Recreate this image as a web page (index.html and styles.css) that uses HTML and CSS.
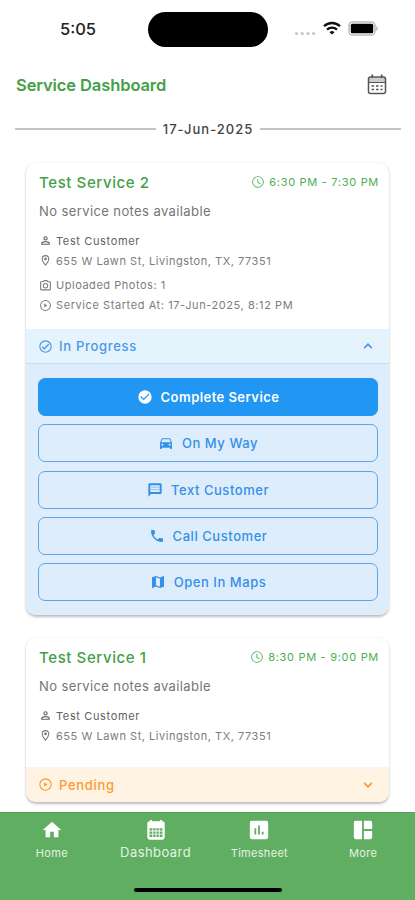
FILE: index.html
```html
<!DOCTYPE html>
<html lang="en">
<head>
<meta charset="utf-8">
<title>Service Dashboard</title>
<link rel="stylesheet" href="styles.css">
</head>
<body>
<svg class="defs" width="0" height="0">
  <symbol id="clock" viewBox="0 0 24 24"><path d="M12 2a10 10 0 1 0 0 20 10 10 0 0 0 0-20zm0 18.500a8.500 8.500 0 1 1 0-17 8.500 8.500 0 0 1 0 17zM11 7h1.500v5.200l4 2.500-.8 1.300L11 13z"/></symbol>
  <symbol id="person" viewBox="0 0 24 24"><path d="M12 6a2 2 0 1 1 0 4 2 2 0 0 1 0-4m0 9c2.700 0 5.800 1.300 6 2v1H6v-1c.2-.7 3.300-2 6-2m0-11a4 4 0 1 0 0 8 4 4 0 0 0 0-8zm0 9c-2.700 0-8 1.300-8 4v3h16v-3c0-2.700-5.300-4-8-4z"/></symbol>
  <symbol id="pin" viewBox="0 0 24 24"><path d="M12 2a7 7 0 0 0-7 7c0 5.250 7 13 7 13s7-7.750 7-13a7 7 0 0 0-7-7zM7 9a5 5 0 0 1 10 0c0 2.880-2.880 7.190-5 9.880C9.920 16.210 7 11.850 7 9z"/><circle cx="12" cy="9" r="2.500"/></symbol>
  <symbol id="camera" viewBox="0 0 24 24"><path d="M20 4h-3.170L15 2H9L7.170 4H4a2 2 0 0 0-2 2v13a2 2 0 0 0 2 2h16a2 2 0 0 0 2-2V6a2 2 0 0 0-2-2zm0 15H4V6h4.050l1.830-2h4.240l1.830 2H20zM12 7.500a5 5 0 1 0 0 10 5 5 0 0 0 0-10zm0 8.200a3.200 3.200 0 1 1 0-6.400 3.200 3.200 0 0 1 0 6.400z"/></symbol>
  <symbol id="play" viewBox="0 0 24 24"><path d="M12 2a10 10 0 1 0 0 20 10 10 0 0 0 0-20zm0 18.200a8.200 8.200 0 1 1 0-16.400 8.200 8.200 0 0 1 0 16.400zM9.700 8.300v7.400l5.600-3.700z"/></symbol>
  <symbol id="check-outline" viewBox="0 0 24 24"><path d="M12 2a10 10 0 1 0 0 20 10 10 0 0 0 0-20zm0 18.200a8.200 8.200 0 1 1 0-16.400 8.200 8.200 0 0 1 0 16.400zM16.590 7.580 10 14.170l-2.590-2.580L6 13l4 4 8-8z"/></symbol>
  <symbol id="check" viewBox="0 0 24 24"><path d="M12 2a10 10 0 1 0 0 20 10 10 0 0 0 0-20zm-2 15-5-5 1.410-1.410L10 14.170l7.590-7.590L19 8z"/></symbol>
  <symbol id="car" viewBox="0 0 24 24"><path d="M18.920 6.010C18.720 5.420 18.160 5 17.500 5h-11c-.66 0-1.210.42-1.420 1.010L3 12v8c0 .55.450 1 1 1h1c.55 0 1-.45 1-1v-1h12v1c0 .55.450 1 1 1h1c.55 0 1-.45 1-1v-8zM6.500 16a1.500 1.500 0 1 1 0-3 1.500 1.500 0 0 1 0 3zm11 0a1.500 1.500 0 1 1 0-3 1.500 1.500 0 0 1 0 3zM5 11l1.500-4.500h11L19 11z"/></symbol>
  <symbol id="message" viewBox="0 0 24 24"><path fill-rule="evenodd" d="M20 2H4a2 2 0 0 0-2 2v18l4-4h14a2 2 0 0 0 2-2V4a2 2 0 0 0-2-2zM5 5h14v10H5z"/><path d="M6 7h12v1.500H6zM6 10.500h12V12H6z" opacity=".45"/></symbol>
  <symbol id="phone" viewBox="0 0 24 24"><path d="M6.620 10.790a15.150 15.150 0 0 0 6.590 6.590l2.200-2.200c.27-.27.670-.36 1.020-.24 1.120.37 2.330.57 3.570.57.550 0 1 .45 1 1V20c0 .55-.45 1-1 1C10.610 21 3 13.390 3 4c0-.55.450-1 1-1h3.500c.55 0 1 .45 1 1 0 1.250.2 2.450.57 3.570.11.350.03.740-.25 1.020z"/></symbol>
  <symbol id="map" viewBox="0 0 24 24"><path d="M20.500 3l-.16.030L15 5.100 9 3 3.360 4.900c-.21.070-.36.250-.36.480V20.500c0 .28.220.5.500.5l.16-.03L9 18.900l6 2.100 5.640-1.900c.21-.07.360-.25.360-.48V3.500c0-.28-.22-.5-.5-.5zM15 19l-6-2.110V5l6 2.110z"/></symbol>
  <symbol id="up" viewBox="0 0 24 24"><path d="M12 8l-6 6 1.600 1.600L12 11.200l4.400 4.400L18 14z"/></symbol>
  <symbol id="down" viewBox="0 0 24 24"><path d="M16.400 8.400 12 12.800 7.600 8.400 6 10l6 6 6-6z"/></symbol>
  <symbol id="home" viewBox="0 0 24 24"><path d="M10 20v-6h4v6h5v-8h3L12 3 2 12h3v8z"/></symbol>
  <symbol id="calendar" viewBox="0 0 24 24"><path fill-rule="evenodd" d="M5 2.500h.5V1h2.200v1.500h8.600V1h2.200v1.500h.5a2.500 2.500 0 0 1 2.500 2.500v15a2.500 2.500 0 0 1-2.500 2.500H5A2.500 2.500 0 0 1 2.500 20V5A2.500 2.500 0 0 1 5 2.500zM5 10v9.500h14V10z"/><path d="M5 12.500h14v1H5zM5 16h14v1H5zM8 10h1v9.500H8zM11.500 10h1v9.500h-1zM15 10h1v9.500h-1z"/></symbol>
  <symbol id="chart" viewBox="0 0 24 24"><path fill-rule="evenodd" d="M4 2h16a2 2 0 0 1 2 2v16a2 2 0 0 1-2 2H4a2 2 0 0 1-2-2V4a2 2 0 0 1 2-2zm3 8v7h2v-7zm4-3v10h2V7zm4 7v3h2v-3z"/></symbol>
  <symbol id="more" viewBox="0 0 24 24"><path d="M11 22H4a2 2 0 0 1-2-2V4a2 2 0 0 1 2-2h7zM13 2h7a2 2 0 0 1 2 2v7h-9zM13 13h9v7a2 2 0 0 1-2 2h-7z"/></symbol>
</svg>

<div class="status">
  <span class="time">5:05</span>
  <span class="island"></span>
  <span class="indicators">
    <svg class="signal" width="22" height="5" viewBox="0 0 22 5"><circle cx="2.500" cy="2.500" r="1.600"/><circle cx="8.200" cy="2.500" r="1.600"/><circle cx="13.900" cy="2.500" r="1.600"/><circle cx="19.600" cy="2.500" r="1.600"/></svg>
    <svg class="wifi" width="18" height="14" viewBox="0 0 18 14" fill="none" stroke="#111" stroke-width="2.300"><path d="M1 5.300a11.300 11.300 0 0 1 16 0M4 8.700a7.200 7.200 0 0 1 10 0"/><path d="M9 13.600 6.500 11.200a3.700 3.700 0 0 1 5 0z" fill="#111" stroke="none"/></svg>
    <svg class="battery" width="31" height="15" viewBox="0 0 31 15"><rect x="1" y="1" width="26" height="13" rx="4" fill="#fff" stroke="#bdbdbd" stroke-width="1.600"/><rect x="2.800" y="2.800" width="22.400" height="9.400" rx="1.500" fill="#000"/><path d="M28.200 5.200c2.200.8 2.200 3.800 0 4.600z" fill="#b9b9b9"/></svg>
  </span>
</div>

<header class="appbar">
  <h1>Service Dashboard</h1>
  <svg width="20" height="22" viewBox="0 0 20 22" fill="none" stroke="#555" stroke-width="1.500"><path d="M2 4h16v5H2z" fill="#ccc" stroke="none"/><rect x="1.500" y="3" width="17" height="16.500" rx="2"/><path d="M1.500 8.500h17" stroke-width="1"/><path d="M5.300 .5v3.500M14.700 .5v3.500" stroke-width="1.700"/><path d="M4.500 12h2.500m2 0h2.500m2 0h2M4.500 15.500h2.500m2 0h2.500m2 0h2" stroke-width="1.500"/></svg>
</header>

<div class="date"><span>17-Jun-2025</span></div>

<main class="list">
  <article class="card">
    <div class="info">
      <div class="head"><h2>Test Service 2</h2><span class="hours"><svg><use href="#clock"/></svg><span>6:30 PM - 7:30 PM</span></span></div>
      <p class="notes">No service notes available</p>
      <p class="row customer"><svg><use href="#person"/></svg><span>Test Customer</span></p>
      <p class="row address"><svg><use href="#pin"/></svg><span>655 W Lawn St, Livingston, TX, 77351</span></p>
      <p class="row photos"><svg><use href="#camera"/></svg><span>Uploaded Photos: 1</span></p>
      <p class="row started"><svg><use href="#play"/></svg><span>Service Started At: 17-Jun-2025, 8:12 PM</span></p>
    </div>
    <div class="state progress"><svg><use href="#check-outline"/></svg><span>In Progress</span><svg class="chevron"><use href="#up"/></svg></div>
    <div class="actions">
      <button class="primary"><svg><use href="#check"/></svg><span>Complete Service</span></button>
      <button><svg><use href="#car"/></svg><span>On My Way</span></button>
      <button class="text"><svg><use href="#message"/></svg><span>Text Customer</span></button>
      <button><svg><use href="#phone"/></svg><span>Call Customer</span></button>
      <button><svg><use href="#map"/></svg><span>Open In Maps</span></button>
    </div>
  </article>

  <article class="card">
    <div class="info short">
      <div class="head"><h2>Test Service 1</h2><span class="hours"><svg><use href="#clock"/></svg><span>8:30 PM - 9:00 PM</span></span></div>
      <p class="notes">No service notes available</p>
      <p class="row customer"><svg><use href="#person"/></svg><span>Test Customer</span></p>
      <p class="row address"><svg><use href="#pin"/></svg><span>655 W Lawn St, Livingston, TX, 77351</span></p>
    </div>
    <div class="state pending"><svg><use href="#play"/></svg><span>Pending</span><svg class="chevron"><use href="#down"/></svg></div>
  </article>
</main>

<nav class="tabs">
  <div class="tab-row">
    <a><svg><use href="#home"/></svg><span>Home</span></a>
    <a class="active"><svg><use href="#calendar"/></svg><span>Dashboard</span></a>
    <a><svg><use href="#chart"/></svg><span>Timesheet</span></a>
    <a><svg><use href="#more"/></svg><span>More</span></a>
  </div>
  <div class="home-bar"></div>
</nav>
</body>
</html>
```
FILE: styles.css
```css
* { box-sizing: border-box; }
html, body { margin: 0; height: 100%; }
body {
  display: flex;
  flex-direction: column;
  height: 900px;
  overflow: hidden;
  background: #fff;
  font-family: Inter, "Liberation Sans", sans-serif;
}
h1, h2, p { margin: 0; }
svg { flex: none; fill: currentColor; }
.defs { position: absolute; }
span { white-space: nowrap; }

.status {
  display: grid;
  grid-template-columns: 148px 120px 1fr;
  align-items: center;
  height: 58px;
  flex: none;
}
.time { padding-left: 60px; font-size: 16.500px; font-weight: 500; color: #222; }
.island { height: 35px; border-radius: 18px; background: #000; }
.indicators { display: flex; align-items: center; padding-left: 26px; }
.signal { margin-top: 8px; fill: #c6c6c6; }
.wifi { margin-left: 7px; margin-top: -2px; fill: none; }
.battery { margin-left: 7px; margin-top: -2px; }

.appbar {
  display: flex;
  justify-content: space-between;
  align-items: center;
  height: 54px;
  padding: 0 28px 0 16px;
  flex: none;
}
.appbar h1 { font-size: 16.500px; font-weight: 600; color: #43a047; letter-spacing: -.1px; }
.appbar svg { fill: none; }

.date {
  display: flex;
  align-items: center;
  gap: 7px;
  height: 33px;
  padding: 0 14px 0 15px;
  flex: none;
  font-size: 13px;
  font-weight: 500;
  letter-spacing: 1px;
  color: #444;
}
.date::before, .date::after { content: ""; flex: 1; height: 2px; background: #c4c4c4; }

.list { display: flex; flex-direction: column; gap: 23px; padding: 18px 26px 0 26px; flex: 1; min-height: 0; }
.card {
  flex: none;
  border-radius: 10px;
  overflow: hidden;
  background: #fff;
  box-shadow: 0 1.500px 2.500px rgba(0, 0, 0, .26);
}
.info { height: 166px; padding: 9px 10px 0 13px; }
.info.short { height: 129px; }
.head { display: flex; justify-content: space-between; align-items: center; height: 20px; }
.head h2 { font-size: 15px; font-weight: 500; letter-spacing: .6px; color: #43a047; }
.hours { display: flex; align-items: center; gap: 4px; font-size: 11px; letter-spacing: .7px; color: #4caf50; }
.hours svg { width: 14px; height: 14px; }
.notes { height: 20px; margin-top: 9px; font-size: 13px; line-height: 20px; letter-spacing: .4px; color: #757575; }
.row { display: flex; align-items: center; gap: 4px; height: 20px; font-size: 11px; letter-spacing: .53px; color: #7c7c7c; }
.row svg { width: 13px; height: 13px; }
.customer { margin-top: 9.500px; color: #616161; letter-spacing: .63px; }
.photos { margin-top: 4.500px; }
.started { letter-spacing: .58px; }

.state { display: flex; align-items: center; gap: 6px; height: 35px; padding: 0 12px 0 12px; font-size: 13px; font-weight: 500; letter-spacing: .7px; }
.state svg { width: 15px; height: 15px; }
.state .chevron { margin-left: auto; width: 18px; height: 18px; }
.progress { color: #4a98e8; background: #e5f3fd; border-bottom: 1px solid #c3e0f8; }
.pending { color: #ff9a2e; background: #fff3e4; }

.actions { display: flex; flex-direction: column; gap: 8.300px; padding: 14px 11px 14px 12px; background: #deedfc; }
.actions button {
  display: flex;
  align-items: center;
  justify-content: center;
  gap: 8px;
  height: 38px;
  padding: 0;
  border: 1.500px solid #5ba5ec;
  border-radius: 7px;
  background: transparent;
  color: #3490e8;
  font: 500 13px Inter, "Liberation Sans", sans-serif;
  letter-spacing: .55px;
}
.actions svg { width: 16px; height: 16px; }
.actions .primary { background: #2196f3; border-color: #2196f3; color: #fff; font-weight: 600; letter-spacing: .45px; }

.tabs { flex: none; height: 88px; background: #5fae61; border-top: 1px solid #55a057; color: #fff; }
.tab-row { display: grid; grid-template-columns: repeat(4, 1fr); height: 75px; }
.tab-row a { display: flex; flex-direction: column; align-items: center; padding-top: 6px; font-size: 11px; letter-spacing: .3px; }
.tab-row svg { width: 22px; height: 22px; }
.tab-row span { line-height: 16px; margin-top: 4px; color: #e4f3e4; }
.tab-row .active span { font-size: 13px; margin-top: 3px; letter-spacing: .45px; }
.home-bar { width: 148px; height: 4px; margin: 0 auto; border-radius: 2px; background: #000; }
```
